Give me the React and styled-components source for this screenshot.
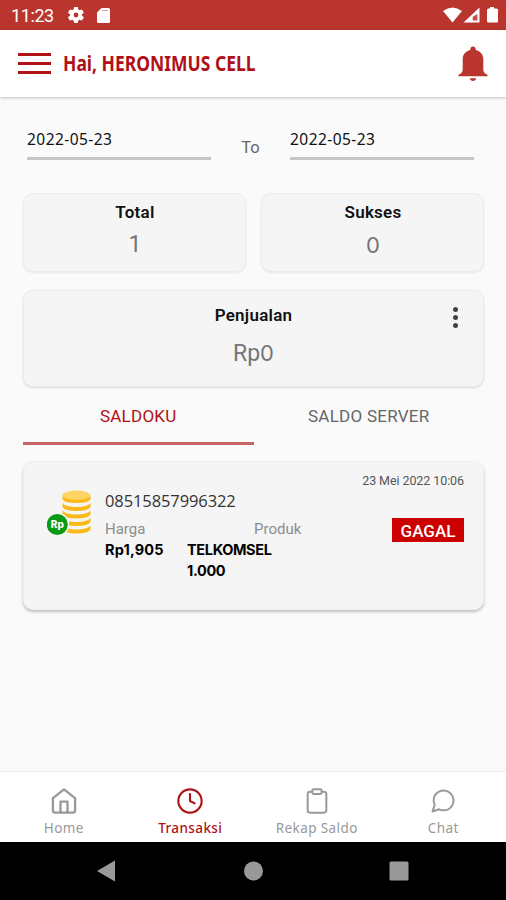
import React from "react";
import styled, { createGlobalStyle, ThemeProvider } from "styled-components";
import { FiClock, FiClipboard, FiMessageCircle } from "react-icons/fi";

const theme = {
	colors: {
		branding: "#b9352e",
		brandingDark: "#b01116",
		danger: "#cc0000",
		background: "#fafafa",
		card: "#f5f5f5",
		text: "#111111",
		muted: "#757575",
		nav: "#999999",
	},
};

const GlobalStyle = createGlobalStyle`
	* {
		box-sizing: border-box;
	}
	body {
		margin: 0;
		background: #fafafa;
		font-family: Roboto, "Liberation Sans", sans-serif;
	}
`;

const Screen = styled.div`
	display: flex;
	flex-direction: column;
	width: 506px;
	height: 900px;
	overflow: hidden;
	background: ${(props) => props.theme.colors.background};
`;

const StatusBar = styled.div`
	display: flex;
	align-items: center;
	flex: none;
	height: 30px;
	padding: 2px 7px 0 11px;
	background: ${(props) => props.theme.colors.branding};
	color: #fff;
`;

const Clock = styled.span`
	width: 57px;
	font-size: 18px;
	line-height: 28px;
	letter-spacing: -0.4px;
`;

const StatusIcons = styled.div`
	display: flex;
	align-items: center;
	gap: ${(props) => props.$gap}px;
	margin-left: ${(props) => (props.$right ? "auto" : "0")};
	margin-top: ${(props) => (props.$right ? 0 : -2)}px;
`;

const Header = styled.header`
	display: flex;
	align-items: center;
	flex: none;
	height: 67px;
	padding: 0 18px;
	background: #fff;
	box-shadow: 0 1px 3px rgba(0, 0, 0, 0.22);
`;

const Burger = styled.div`
	display: flex;
	flex-direction: column;
	gap: 6px;
	width: 33px;
	span {
		height: 3px;
		background: ${(props) => props.theme.colors.brandingDark};
	}
`;

const Greeting = styled.h1`
	margin: 0 auto 2px 12px;
	font-family: "Noto Sans", sans-serif;
	font-size: 20.5px;
	font-weight: 700;
	line-height: 28px;
	white-space: nowrap;
	width: 200px;
	color: ${(props) => props.theme.colors.brandingDark};
	transform: scaleX(0.853);
	transform-origin: left center;
`;

const Content = styled.main`
	flex: 1;
	padding: 31px 22px 0 23px;
`;

const DateRow = styled.div`
	display: flex;
	justify-content: space-between;
	width: 447px;
	margin-left: 4px;
`;

const DateField = styled.div`
	width: 184px;
	height: 32px;
	border-bottom: 3px solid #c6c6c6;
	font-family: "Noto Sans", sans-serif;
	font-size: 15.5px;
	line-height: 23px;
	letter-spacing: 0.45px;
	color: ${(props) => props.theme.colors.text};
`;

const To = styled.span`
	padding-top: 10px;
	font-size: 16.5px;
	line-height: 20px;
	color: #666;
`;

const Card = styled.section`
	border: 1px solid #ececec;
	border-radius: 10px;
	background: ${(props) => props.theme.colors.card};
	box-shadow: 0 1px 2px rgba(0, 0, 0, ${(props) => props.$shadow || 0.08});
`;

const Stats = styled.div`
	display: grid;
	grid-template-columns: 223px 223px;
	justify-content: space-between;
	margin-top: 33px;
`;

const StatCard = styled(Card)`
	height: 79px;
	padding: 7px 0 0 1px;
	text-align: center;
`;

const SalesCard = styled(Card)`
	position: relative;
	height: 97px;
	margin-top: 18px;
	padding-top: 13px;
	text-align: center;
`;

const Label = styled.h2`
	margin: 0;
	font-size: 17px;
	font-weight: 600;
	line-height: 22px;
	letter-spacing: 0.25px;
	color: ${(props) => props.theme.colors.text};
`;

const Value = styled.div`
	margin-top: ${(props) => props.$top}px;
	font-size: 23px;
	line-height: 28px;
	color: ${(props) => props.theme.colors.muted};
`;

const Zero = styled.span`
	font-family: Inter, sans-serif;
	font-size: 22px;
	font-weight: 400;
`;

const More = styled.div`
	position: absolute;
	top: 16px;
	right: 25px;
	display: flex;
	flex-direction: column;
	gap: 3px;
	span {
		width: 5px;
		height: 5px;
		border-radius: 50%;
		background: #444;
	}
`;

const Tabs = styled.nav`
	display: grid;
	grid-template-columns: 1fr 1fr;
	height: 58px;
`;

const Tab = styled.div`
	border-bottom: 3px solid ${(props) => (props.$active ? "#c66564" : "transparent")};
	padding-top: 17px;
	font-size: 17px;
	line-height: 24px;
	letter-spacing: 0.25px;
	text-align: center;
	color: ${(props) => (props.$active ? props.theme.colors.brandingDark : "#666")};
`;

const Transaction = styled(Card)`
	display: flex;
	height: 149px;
	margin-top: 16px;
	padding: 27px 19px 0 23px;
	border-color: #efefef;
	box-shadow: 0 2px 3px rgba(0, 0, 0, 0.24);
`;

const Details = styled.div`
	width: 210px;
	margin-left: 14px;
`;

const Phone = styled.div`
	font-family: "Open Sans", sans-serif;
	font-size: 16.5px;
	line-height: 24px;
	letter-spacing: -0.1px;
	color: #333;
`;

const Pair = styled.div`
	display: grid;
	grid-template-columns: ${(props) => props.$columns};
	margin-top: ${(props) => props.$top || 0}px;
`;

const Caption = styled.span`
	font-size: 15px;
	line-height: 20px;
	color: #8d8d8d;
`;

const Strong = styled.span`
	font-family: Inter, sans-serif;
	font-size: 14.5px;
	font-weight: 700;
	line-height: 21px;
	letter-spacing: ${(props) => props.$spacing}px;
	color: #000;
`;

const Side = styled.div`
	display: flex;
	flex: 1;
	flex-direction: column;
	align-items: flex-end;
	margin-top: -16px;
`;

const Timestamp = styled.span`
	font-size: 12.5px;
	line-height: 16px;
	letter-spacing: -0.08px;
	white-space: nowrap;
	color: #555;
`;

const Status = styled.span`
	width: 72px;
	height: 24px;
	margin-top: 29px;
	background: ${(props) => props.theme.colors.danger};
	font-size: 17px;
	font-weight: 500;
	line-height: 26px;
	text-align: center;
	color: #fff;
`;

const BottomNav = styled.nav`
	display: grid;
	grid-template-columns: repeat(4, 1fr);
	flex: none;
	height: 71px;
	border-top: 1px solid #ececec;
	background: #fff;
`;

const NavItem = styled.div`
	display: flex;
	flex-direction: column;
	align-items: center;
	padding: 15px 0 0 1px;
	font-family: "Noto Sans", sans-serif;
	font-size: 13.5px;
	line-height: 18px;
	letter-spacing: 0.4px;
	font-weight: ${(props) => (props.$active ? 500 : 400)};
	color: ${(props) => (props.$active ? props.theme.colors.brandingDark : props.theme.colors.nav)};
	svg {
		margin-bottom: 4px;
	}
`;

const SystemNav = styled.div`
	flex: none;
	height: 58px;
	background: #000;
`;

const Gear = () => (
	<svg width="16" height="16" viewBox="2 2 20 20" fill="#fff">
		<path d="M19.4 13a7.5 7.5 0 0 0 0-2l2.1-1.6a.5.5 0 0 0 .1-.7l-2-3.4a.5.5 0 0 0-.6-.2l-2.5 1a7.3 7.3 0 0 0-1.7-1l-.4-2.6a.5.5 0 0 0-.5-.5h-4a.5.5 0 0 0-.5.5L9 5.1a7.7 7.7 0 0 0-1.7 1l-2.5-1a.5.5 0 0 0-.6.2l-2 3.4a.5.5 0 0 0 .1.7L4.5 11a8 8 0 0 0 0 2l-2.2 1.6a.5.5 0 0 0-.1.7l2 3.4c.1.2.4.3.6.2l2.5-1a7.3 7.3 0 0 0 1.7 1l.4 2.6c0 .3.2.5.5.5h4c.3 0 .5-.2.5-.5l.4-2.6a7.7 7.7 0 0 0 1.7-1l2.5 1c.2.1.5 0 .6-.2l2-3.4a.5.5 0 0 0-.1-.7zM12 15a3 3 0 1 1 0-6 3 3 0 0 1 0 6z" />
	</svg>
);

const SdCard = () => (
	<svg width="13" height="15" viewBox="0 0 13 15">
		<path d="M4.5 0H11.5Q13 0 13 1.5V13.5Q13 15 11.5 15H1.5Q0 15 0 13.5V4.5Z" fill="#fff" />
		<path d="M5 2.5h6" stroke="#b9352e" strokeWidth="0.8" opacity="0.6" />
	</svg>
);

const Bell = () => (
	<svg width="30" height="36" viewBox="0 0 30 36" fill="#b9352e">
		<path d="M15 0.500c1.700 0 2.700 1.200 2.700 2.900v.5c4.700 1.200 7.600 4.300 7.600 9.100v10.500c0 2.200 1 4 4.200 5.300v1.400H.5v-1.400c3.200-1.300 4.200-3.100 4.200-5.300V13c0-4.800 2.900-7.900 7.600-9.100v-.5c0-1.700 1-2.900 2.700-2.900z" />
		<path d="M11.800 32.200h6.400c-.5 1.800-1.600 2.800-3.200 2.800s-2.700-1-3.200-2.800z" />
	</svg>
);

const Coins = () => (
	<svg width="44" height="50" viewBox="0 0 44 50">
		{[37.5, 30, 22.5, 15].map((y) => (
			<path key={y} d={`M15.500 ${y - 1}q3 4 14 4t14-4v4q-2 4-14 4t-14-4z`} fill="#fbb917" />
		))}
		<path d="M15.500 6.500v4q2 3.500 14 3.500t14-3.500v-4z" fill="#fbb917" />
		<ellipse cx="29.500" cy="6.200" rx="14" ry="4.600" fill="#ffd467" />
		<circle cx="10.300" cy="35.500" r="12" fill="#f5f5f5" />
		<circle cx="10.300" cy="35.500" r="10.500" fill="#0b9a16" />
		<text x="10.300" y="38.800" textAnchor="middle" fontFamily="Inter, sans-serif" fontSize="10" fontWeight="800" fill="#fff">Rp</text>
	</svg>
);

export default function App() {
	return (
		<ThemeProvider theme={theme}>
			<GlobalStyle />
			<Screen>
				<StatusBar>
					<Clock>11:23</Clock>
					<StatusIcons $gap={13}>
						<Gear />
						<SdCard />
					</StatusIcons>
					<StatusIcons $right>
						<svg width="56" height="18" viewBox="0 0 56 18" fill="#fff">
							<path d="M0 4Q9.5-3 19 4L9.500 15.500z" />
							<path d="M36.500 .5v15H20.500z" />
							<path d="M34.500 7v6.500h-4.800V9.800z" fill="#b9352e" opacity="0.85" />
							<path d="M47 1.500V0h4v1.500h2.500Q55 1.500 55 3V14q0 1.500-1.500 1.500h-8Q44 15.500 44 14V3Q44 1.500 45.500 1.500z" />
						</svg>
					</StatusIcons>
				</StatusBar>

				<Header>
					<Burger>
						<span />
						<span />
						<span />
					</Burger>
					<Greeting>Hai, HERONIMUS CELL</Greeting>
					<Bell />
				</Header>

				<Content>
					<DateRow>
						<DateField>2022-05-23</DateField>
						<To>To</To>
						<DateField>2022-05-23</DateField>
					</DateRow>

					<Stats>
						<StatCard>
							<Label>Total</Label>
							<Value $top={8}>1</Value>
						</StatCard>
						<StatCard>
							<Label>Sukses</Label>
							<Value $top={8}>
								<Zero>0</Zero>
							</Value>
						</StatCard>
					</Stats>

					<SalesCard $shadow={0.14}>
						<Label>Penjualan</Label>
						<Value $top={13}>
							Rp<Zero>0</Zero>
						</Value>
						<More>
							<span />
							<span />
							<span />
						</More>
					</SalesCard>

					<Tabs>
						<Tab $active>SALDOKU</Tab>
						<Tab>SALDO SERVER</Tab>
					</Tabs>

					<Transaction>
						<Coins />
						<Details>
							<Phone>08515857996322</Phone>
							<Pair $columns="149px auto" $top={6}>
								<Caption>Harga</Caption>
								<Caption>Produk</Caption>
							</Pair>
							<Pair $columns="82px 100px">
								<Strong $spacing={0.15}>Rp1,905</Strong>
								<Strong $spacing={-0.35}>TELKOMSEL 1.000</Strong>
							</Pair>
						</Details>
						<Side>
							<Timestamp>23 Mei 2022 10:06</Timestamp>
							<Status>GAGAL</Status>
						</Side>
					</Transaction>
				</Content>

				<BottomNav>
					<NavItem>
						<svg width="28" height="28" viewBox="0 0 24 24" fill="none" stroke="currentColor" strokeWidth="2" strokeLinejoin="round">
							<path d="M2.500 9.500 12 2l9.500 7.500V20a2 2 0 0 1-2 2h-15a2 2 0 0 1-2-2z" />
							<path d="M9 22V12.500h6V22" />
						</svg>
						Home
					</NavItem>
					<NavItem $active>
						<FiClock size={28} strokeWidth={1.8} />
						Transaksi
					</NavItem>
					<NavItem>
						<FiClipboard size={28} strokeWidth={1.7} />
						Rekap Saldo
					</NavItem>
					<NavItem>
						<FiMessageCircle size={28} strokeWidth={1.7} />
						Chat
					</NavItem>
				</BottomNav>

				<SystemNav>
					<svg width="506" height="58" viewBox="0 0 506 58" fill="#999">
						<path d="M97 29l18-10.500v21z" />
						<circle cx="253.500" cy="29" r="9.500" />
						<rect x="389.500" y="19.500" width="19" height="19" rx="1.500" />
					</svg>
				</SystemNav>
			</Screen>
		</ThemeProvider>
	);
}
